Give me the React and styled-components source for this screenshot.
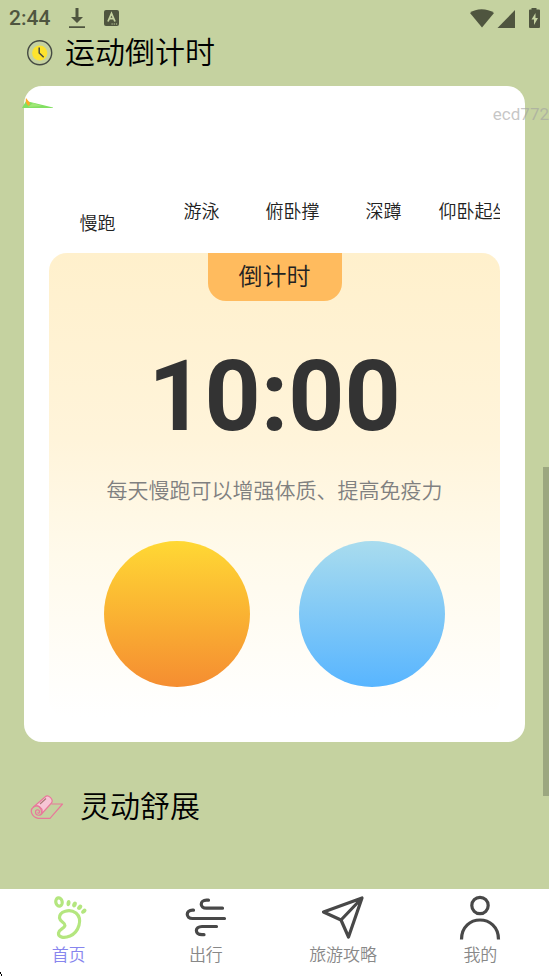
import React, { useState } from "react";
import styled, { createGlobalStyle } from "styled-components";

const GlobalStyle = createGlobalStyle`
  * { box-sizing: border-box; }
  body {
    margin: 0;
    background: #c5d2a0;
    color: #000;
    font-family: Roboto, "Noto Sans CJK SC", sans-serif;
    font-weight: 350;
    overflow-x: hidden;
  }
  button { font: inherit; color: inherit; border: 0; padding: 0; background: none; cursor: pointer; }
  svg { display: block; flex: none; }
`;

const Page = styled.div`
  position: relative;
  display: flex;
  flex-direction: column;
  min-height: 100vh;
`;

const StatusBar = styled.header`
  display: flex;
  align-items: center;
  justify-content: space-between;
  height: 36px;
  padding: 0 9px;
  color: #4f553f;
`;

const StatusGroup = styled.div`
  display: flex;
  align-items: center;
  gap: ${(p) => p.$gap}px;
`;

const Clock = styled.time`
  font-size: 21px;
  line-height: 38px;
  font-weight: 500;
`;

const Main = styled.main`
  flex: 1;
  padding: 0 24px;
`;

const SectionTitle = styled.h2`
  display: flex;
  align-items: center;
  gap: ${(p) => p.$gap}px;
  margin: 0;
  padding-left: ${(p) => p.$inset}px;
  font-size: 30px;
  line-height: 34px;
  font-weight: inherit;
`;

const Card = styled.section`
  position: relative;
  margin: 16px 0 48px;
  padding: 24px 25px 25px;
  border-radius: 18px;
  background: #fff;
`;

const Confetti = styled.svg`
  position: absolute;
  left: -2px;
  top: 12px;
`;

const Watermark = styled.span`
  position: absolute;
  top: 104px;
  right: 0;
  font-size: 17px;
  line-height: 20px;
  font-weight: 400;
  color: rgba(160, 160, 160, 0.6);
`;

const Tabs = styled.div`
  display: flex;
  overflow: hidden;
  height: 143px;
`;

const Tab = styled.button`
  && {
    flex: none;
    align-self: flex-start;
    width: ${(p) => (p.$active ? 97 : 91)}px;
    margin-right: ${(p) => (p.$active ? 10 : 0)}px;
    padding-top: ${(p) => (p.$active ? 101 : 89)}px;
    font-size: 18px;
    line-height: 26px;
    color: #222;
    white-space: nowrap;
  }
`;

const Panel = styled.div`
  display: flex;
  flex-direction: column;
  align-items: center;
  padding-bottom: 30px;
  border-radius: 18px;
  background: linear-gradient(#fff0cc, #fff4da 40%, #fffaeb 65%, #fff);
`;

const PanelLabel = styled.h3`
  margin: 0;
  padding: 0 31px;
  border-radius: 0 0 18px 18px;
  background: #ffbb5e;
  color: #222;
  font-size: 24px;
  line-height: 48px;
  font-weight: inherit;
`;

const Countdown = styled.div`
  margin-top: 38px;
  font-size: 98px;
  line-height: 116px;
  font-weight: 700;
  color: #333;
`;

const Hint = styled.p`
  margin: 19px 0 32px;
  font-size: 21px;
  line-height: 35px;
  color: #808080;
`;

const Actions = styled.div`
  display: flex;
  justify-content: center;
  gap: 49px;
`;

const RoundButton = styled.button`
  && {
    width: 146px;
    height: 146px;
    border-radius: 50%;
    background: linear-gradient(${(p) => p.$from}, ${(p) => p.$to});
  }
`;

const ScrollThumb = styled.div`
  position: absolute;
  right: 0;
  top: 467px;
  width: 6px;
  height: 329px;
  background: #9ca780;
`;

const Nav = styled.nav`
  position: sticky;
  bottom: 0;
  display: grid;
  grid-template-columns: repeat(4, 1fr);
  height: 87px;
  background: #fff;
`;

const NavLink = styled.a`
  display: flex;
  flex-direction: column;
  align-items: center;
  padding-top: 5px;
  text-decoration: none;
  font-size: 17px;
  line-height: 26px;
  color: ${(p) => (p.$active ? "#8785ee" : "#888")};
`;

const NavIcon = styled.svg`
  width: 48px;
  height: 48px;
  fill: none;
  stroke: ${(p) => p.$color};
  stroke-width: 3.2;
  stroke-linecap: round;
  stroke-linejoin: round;
`;

const CornerMark = styled.svg`
  position: absolute;
  left: 0;
  bottom: 0;
`;

const exercises = ["慢跑", "游泳", "俯卧撑", "深蹲", "仰卧起坐"];

const ink = "#484848";
const navItems = [
  {
    label: "首页",
    color: "#b4e67f",
    icon: (
      <>
        <ellipse cx="14" cy="8" rx="3.2" ry="4.2" transform="rotate(-12 14 8)" />
        <g fill="#b4e67f" stroke="none">
          <ellipse cx="23.5" cy="9.2" rx="2" ry="3.1" transform="rotate(5 23.5 9.2)" />
          <ellipse cx="29.5" cy="10.5" rx="2.1" ry="3" transform="rotate(25 29.5 10.5)" />
          <ellipse cx="34.7" cy="13.3" rx="2.1" ry="3" transform="rotate(40 34.7 13.3)" />
          <ellipse cx="38.8" cy="17.2" rx="2" ry="3" transform="rotate(48 38.8 17.2)" />
        </g>
        <path d="M14.5 24C14 17 25 14.5 31 19C38 25 34 38 25 42C19 44.5 13 43.5 13.5 39C14 35 19 35 20 31.500C20.500 28.500 15 28 14.500 24Z" />
      </>
    ),
  },
  {
    label: "出行",
    color: ink,
    icon: (
      <path d="M26.500 6.200H24.500C17.500 6.200 17.500 14.200 24.500 14.200H40.500M11.500 16.200H10.500C3.500 16.200 3.500 24.500 10.500 24.500H42.500M34.500 32.500H20C12.500 32.500 12.500 40.700 20 40.700H22" />
    ),
  },
  {
    label: "旅游攻略",
    color: ink,
    icon: <path d="M43 4L4.5 18L22 26L29.5 43L43 4L22 26" />,
  },
  {
    label: "我的",
    color: ink,
    icon: (
      <>
        <circle cx="24" cy="11.5" r="8.2" />
        <path d="M5.5 45.5C5.5 19.500 42.500 19.500 42.500 45.5" strokeLinecap="butt" />
      </>
    ),
  },
];

function DownloadIcon() {
  return (
    <svg width="16" height="21" viewBox="0 0 16 21" fill="currentColor" aria-hidden="true">
      <path d="M6.5 0h3v9H14L8 15 2 9h4.5zM0 18.3h16V20H0z" />
    </svg>
  );
}

function KeyboardIcon() {
  return (
    <svg width="15" height="16" viewBox="0 0 15 16" aria-hidden="true">
      <rect width="15" height="16" rx="2" fill="currentColor" />
      <path d="M4 11.5 7.5 3.5 11 11.5M5.4 8.7h4.2" fill="none" stroke="#c5d2a0" strokeWidth="1.8" />
      <path d="M7.5 14h1.2m1 0h1.2m1 0h1.2" stroke="#c5d2a0" strokeWidth="1.2" />
    </svg>
  );
}

function SignalIcons() {
  return (
    <svg width="70" height="22" viewBox="0 0 70 22" fill="currentColor" aria-hidden="true">
      <path d="M0 6C6 1 17 1 24 6L12 20.500Z" />
      <path d="M45 3V21H27.5Z" />
      <path d="M61.500 1h5V2.500h2.500a1 1 0 0 1 1 1v16.500a1 1 0 0 1-1 1H60a1 1 0 0 1-1-1V3.500a1 1 0 0 1 1-1h1.500z" />
      <path d="M65.500 6 61.500 12.500h2.500v5.500l4-7H65.500z" fill="#c5d2a0" />
    </svg>
  );
}

function ClockIcon() {
  return (
    <svg width="26" height="26" viewBox="0 0 26 26" fill="none" stroke="#454a43" strokeWidth="1.4" aria-hidden="true">
      <circle cx="12.700" cy="12.700" r="12" />
      <circle cx="12.700" cy="13" r="7.6" fill="#fde32d" stroke="none" />
      <path d="M12.200 7.500v5.500l4.500 4.300" strokeWidth="1.5" />
    </svg>
  );
}

function MatIcon() {
  return (
    <svg width="34" height="25" viewBox="0 0 34 25" fill="none" stroke="#e8799a" strokeWidth="1.2" strokeLinejoin="round" aria-hidden="true">
      <path d="M21.500 9H32.500L20 23.300H8" />
      <path d="M3.500 12 15 2C18-1 24 4 21.500 8L11.500 19C12 12 7 9 3.500 12Z" fill="#f7c5d5" />
      <path d="M8 23.300C2 22 -1 15.500 3.500 12C8 9 13 13 12 17.500C11 21.500 5.500 21 5.500 17C5.500 14 9.500 14 9.500 17C9.500 18.500 8 18.500 7.500 17.500" />
      <path d="M10 9 16 3.500" stroke="#ac7775" />
    </svg>
  );
}

export default function App() {
  const [active, setActive] = useState(0);
  return (
    <>
      <GlobalStyle />
      <Page>
        <StatusBar>
          <StatusGroup $gap={19}>
            <Clock>2:44</Clock>
            <DownloadIcon />
            <KeyboardIcon />
          </StatusGroup>
          <SignalIcons />
        </StatusBar>
        <Main>
          <SectionTitle $gap={12} $inset={3}>
            <ClockIcon />
            运动倒计时
          </SectionTitle>
          <Card>
            <Confetti width="32" height="11" viewBox="0 0 32 11" aria-hidden="true">
              <path d="M0 10 4 3 31 9.5V10Z" fill="#82df62" />
              <path d="M6 9 11 5 20 8Z" fill="#a0e777" />
              <path d="M4 0C3 4 5 7 7 8L8 5Z" fill="#ffa928" />
            </Confetti>
            <Tabs>
              {exercises.map((name, i) => (
                <Tab key={name} $active={i === active} onClick={() => setActive(i)}>
                  {name}
                </Tab>
              ))}
            </Tabs>
            <Panel>
              <PanelLabel>倒计时</PanelLabel>
              <Countdown>10:00</Countdown>
              <Hint>每天慢跑可以增强体质、提高免疫力</Hint>
              <Actions>
                <RoundButton $from="#ffd834" $to="#f58d31" aria-label="开始" />
                <RoundButton $from="#a9dcee" $to="#58b5ff" aria-label="重置" />
              </Actions>
            </Panel>
          </Card>
          <SectionTitle $gap={16} $inset={6}>
            <MatIcon />
            灵动舒展
          </SectionTitle>
        </Main>
        <Nav>
          {navItems.map((item, i) => (
            <NavLink key={item.label} href="#" $active={i === 0}>
              <NavIcon viewBox="0 0 48 48" $color={item.color} aria-hidden="true">
                {item.icon}
              </NavIcon>
              {item.label}
            </NavLink>
          ))}
          <CornerMark width="3" height="4" viewBox="0 0 3 4" aria-hidden="true">
            <path d="M0 0H1V2H2V4H1V2H0Z" fill="#000" />
          </CornerMark>
        </Nav>
        <Watermark>ecd772</Watermark>
        <ScrollThumb />
      </Page>
    </>
  );
}
